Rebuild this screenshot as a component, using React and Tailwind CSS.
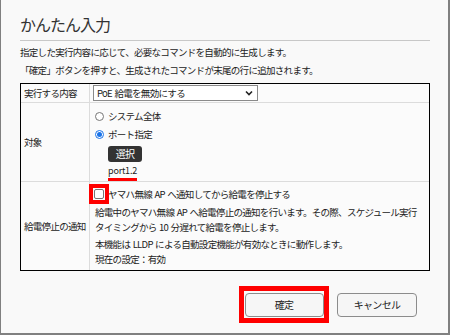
export default function App() {
  const font = "font-['Noto_Sans_CJK_JP','Noto_Sans',sans-serif]";
  return (
    <div className={`w-[450px] h-[335px] bg-[#f9f9f9] border-l border-r-2 border-b-2 border-[#808080] pl-[19px] pr-[18px] text-[#222] text-[9.5px] tracking-[-0.7px] [word-spacing:1px] ${font}`}>
      <div className="h-[41px] border-b border-[#c8c8c8] pt-[12px]">
        <div className="text-[16px] leading-[24px] tracking-[-1px] text-[#333]">かんたん入力</div>
      </div>
      <div className="mt-[2px] leading-[18px] whitespace-nowrap">
        <div>指定した実行内容に応じて、必要なコマンドを自動的に生成します。</div>
        <div>「確定」ボタンを押すと、生成されたコマンドが末尾の行に追加されます。</div>
      </div>
      <div className="mt-[4px] border border-black bg-[#fbfbfb]">
        {/* row 1 */}
        <div className="flex">
          <div className="w-[69px] shrink-0 border-r border-[#dcdcdc] pl-[3px] flex items-center leading-[18px]">実行する内容</div>
          <div className="flex-1 flex items-center pl-[3px] h-[18px]">
            <div className="w-[165px] h-[16px] border border-[#8a8a8a] bg-white flex items-center justify-between pl-[3px] pr-[4px] leading-[14px]">
              <span>PoE 給電を無効にする</span>
              <svg width="8" height="6" viewBox="0 0 8 6"><polyline points="1,1.5 4,4.5 7,1.5" fill="none" stroke="#222" strokeWidth="1.6" /></svg>
            </div>
          </div>
        </div>
        {/* row 2 */}
        <div className="flex border-t border-[#dcdcdc]">
          <div className="w-[69px] shrink-0 border-r border-[#dcdcdc] pl-[3px] flex items-center">対象</div>
          <div className="flex-1 pt-[4px] pl-[5px]">
            <div className="flex items-center leading-[18px] h-[18px]">
              <span className="w-[9px] h-[9px] rounded-full border border-[#767676] bg-white mr-[4px]" />
              <span>システム全体</span>
            </div>
            <div className="flex items-center leading-[18px] h-[18px]">
              <span className="w-[9px] h-[9px] rounded-full border border-[#1a73e8] bg-white mr-[4px] flex items-center justify-center">
                <span className="w-[5px] h-[5px] rounded-full bg-[#1a73e8]" />
              </span>
              <span>ポート指定</span>
            </div>
            <div className="pl-[13px] mt-[3px]">
              <div className="w-[34px] h-[16px] bg-[#333] rounded-[3px] text-white text-[10px] flex items-center justify-center leading-[14px]">選択</div>
              <div className="mt-[2px] inline-block leading-[14px] text-[9px] tracking-[-0.2px] border-b-[3px] border-[#ff0000]">port1.2</div>
            </div>
          </div>
        </div>
        {/* row 3 */}
        <div className="flex border-t border-[#dcdcdc]">
          <div className="w-[69px] shrink-0 border-r border-[#dcdcdc] pl-[3px] flex items-center">給電停止の通知</div>
          <div className="flex-1 pt-[4px] pl-[4px] pb-[3px] whitespace-nowrap">
            <div className="flex items-center h-[16px] leading-[16px]">
              <span className="relative w-[10px] h-[10px] mr-[4px]">
                <span className="absolute inset-0 border border-[#767676] bg-white rounded-[2px]" />
                <span className="absolute left-[-5px] top-[-5px] w-[20px] h-[20px] border-[4px] border-[#ff0000]" />
              </span>
              <span>ヤマハ無線 AP へ通知してから給電を停止する</span>
            </div>
            <div className="mt-[3px] pl-[1px] leading-[15px]">
              <div>給電中のヤマハ無線 AP へ給電停止の通知を行います。その際、スケジュール実行</div>
              <div>タイミングから 10 分遅れて給電を停止します。</div>
            </div>
            <div className="mt-[2px] pl-[1px] leading-[15px]">
              <div>本機能は LLDP による自動設定機能が有効なときに動作します。</div>
              <div>現在の設定：有効</div>
            </div>
          </div>
        </div>
      </div>
      <div className="mt-[15px] flex justify-end items-center gap-[8px] pr-[13px]">
        <div className="border-[5px] border-[#ff0000] w-[90px] h-[37px] flex items-center justify-center">
          <div className="w-[79px] h-[24px] border border-[#8c8c8c] rounded-[4px] bg-[#f6f6f6] flex items-center justify-center text-[10px]">確定</div>
        </div>
        <div className="w-[80px] h-[24px] border border-[#8c8c8c] rounded-[4px] bg-[#f6f6f6] flex items-center justify-center text-[10px]">キャンセル</div>
      </div>
    </div>
  );
}
